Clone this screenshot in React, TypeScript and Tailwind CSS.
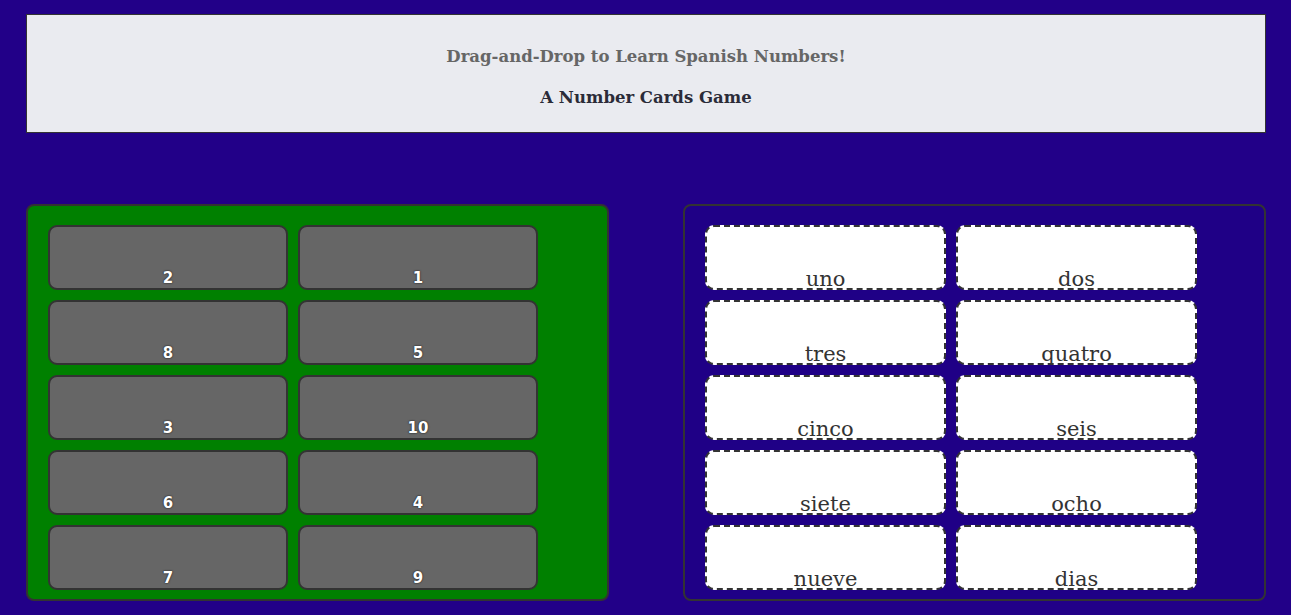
import React from "react";

// Shuffled number cards on the left, Spanish words on the right
const numberCards = ["2", "1", "8", "5", "3", "10", "6", "4", "7", "9"];
const wordSlots = [
  "uno",
  "dos",
  "tres",
  "quatro",
  "cinco",
  "seis",
  "siete",
  "ocho",
  "nueve",
  "dias",
];

const serif = "font-['Georgia','DejaVu_Serif',serif]";

function NumberCard({ label }: { label: string }) {
  return (
    <div className="w-[240px] h-[65px] bg-[#666666] border-2 border-[#333333] rounded-[9px] overflow-hidden flex justify-center">
      <span className="pt-[44px] text-[15px] leading-[15px] font-bold text-white font-['Verdana','DejaVu_Sans',sans-serif] [text-shadow:0_0_2px_#222,0_0_1px_#222]">
        {label}
      </span>
    </div>
  );
}

function WordSlot({ word }: { word: string }) {
  return (
    <div className="w-[241px] h-[65px] bg-white border-2 border-dashed border-[#333333] rounded-[9px] overflow-hidden flex justify-center">
      <span
        className={`pt-[40px] text-[21px] leading-[24px] text-[#333333] ${serif}`}
      >
        {word}
      </span>
    </div>
  );
}

export default function App() {
  return (
    <div className="min-h-[615px] bg-[#220088] pt-[14px] pl-[26px] pr-[25px] pb-[14px]">
      {/* Title box */}
      <div className="h-[119px] bg-[#eaebf0] border border-[#333333] pt-[31px] flex flex-col items-center gap-[19px]">
        <p
          className={`text-[16.5px] leading-[22px] font-bold text-[#666666] ${serif}`}
        >
          Drag-and-Drop to Learn Spanish Numbers!
        </p>
        <p
          className={`text-[16.5px] leading-[22px] font-bold text-[#2b2b38] ${serif}`}
        >
          A Number Cards Game
        </p>
      </div>

      <div className="mt-[71px] flex justify-between">
        {/* Number cards */}
        <div className="w-[583px] h-[397px] bg-[#008000] border-2 border-[#333333] rounded-[8px] pt-[19px] pl-[20px]">
          <div className="grid grid-cols-[240px_240px] gap-[10px]">
            {numberCards.map((n) => (
              <NumberCard key={n} label={n} />
            ))}
          </div>
        </div>

        {/* Drop slots */}
        <div className="w-[583px] h-[397px] bg-[#1f0086] border-2 border-[#333333] rounded-[8px] pt-[19px] pl-[20px]">
          <div className="grid grid-cols-[241px_241px] gap-[10px]">
            {wordSlots.map((w) => (
              <WordSlot key={w} word={w} />
            ))}
          </div>
        </div>
      </div>
    </div>
  );
}
